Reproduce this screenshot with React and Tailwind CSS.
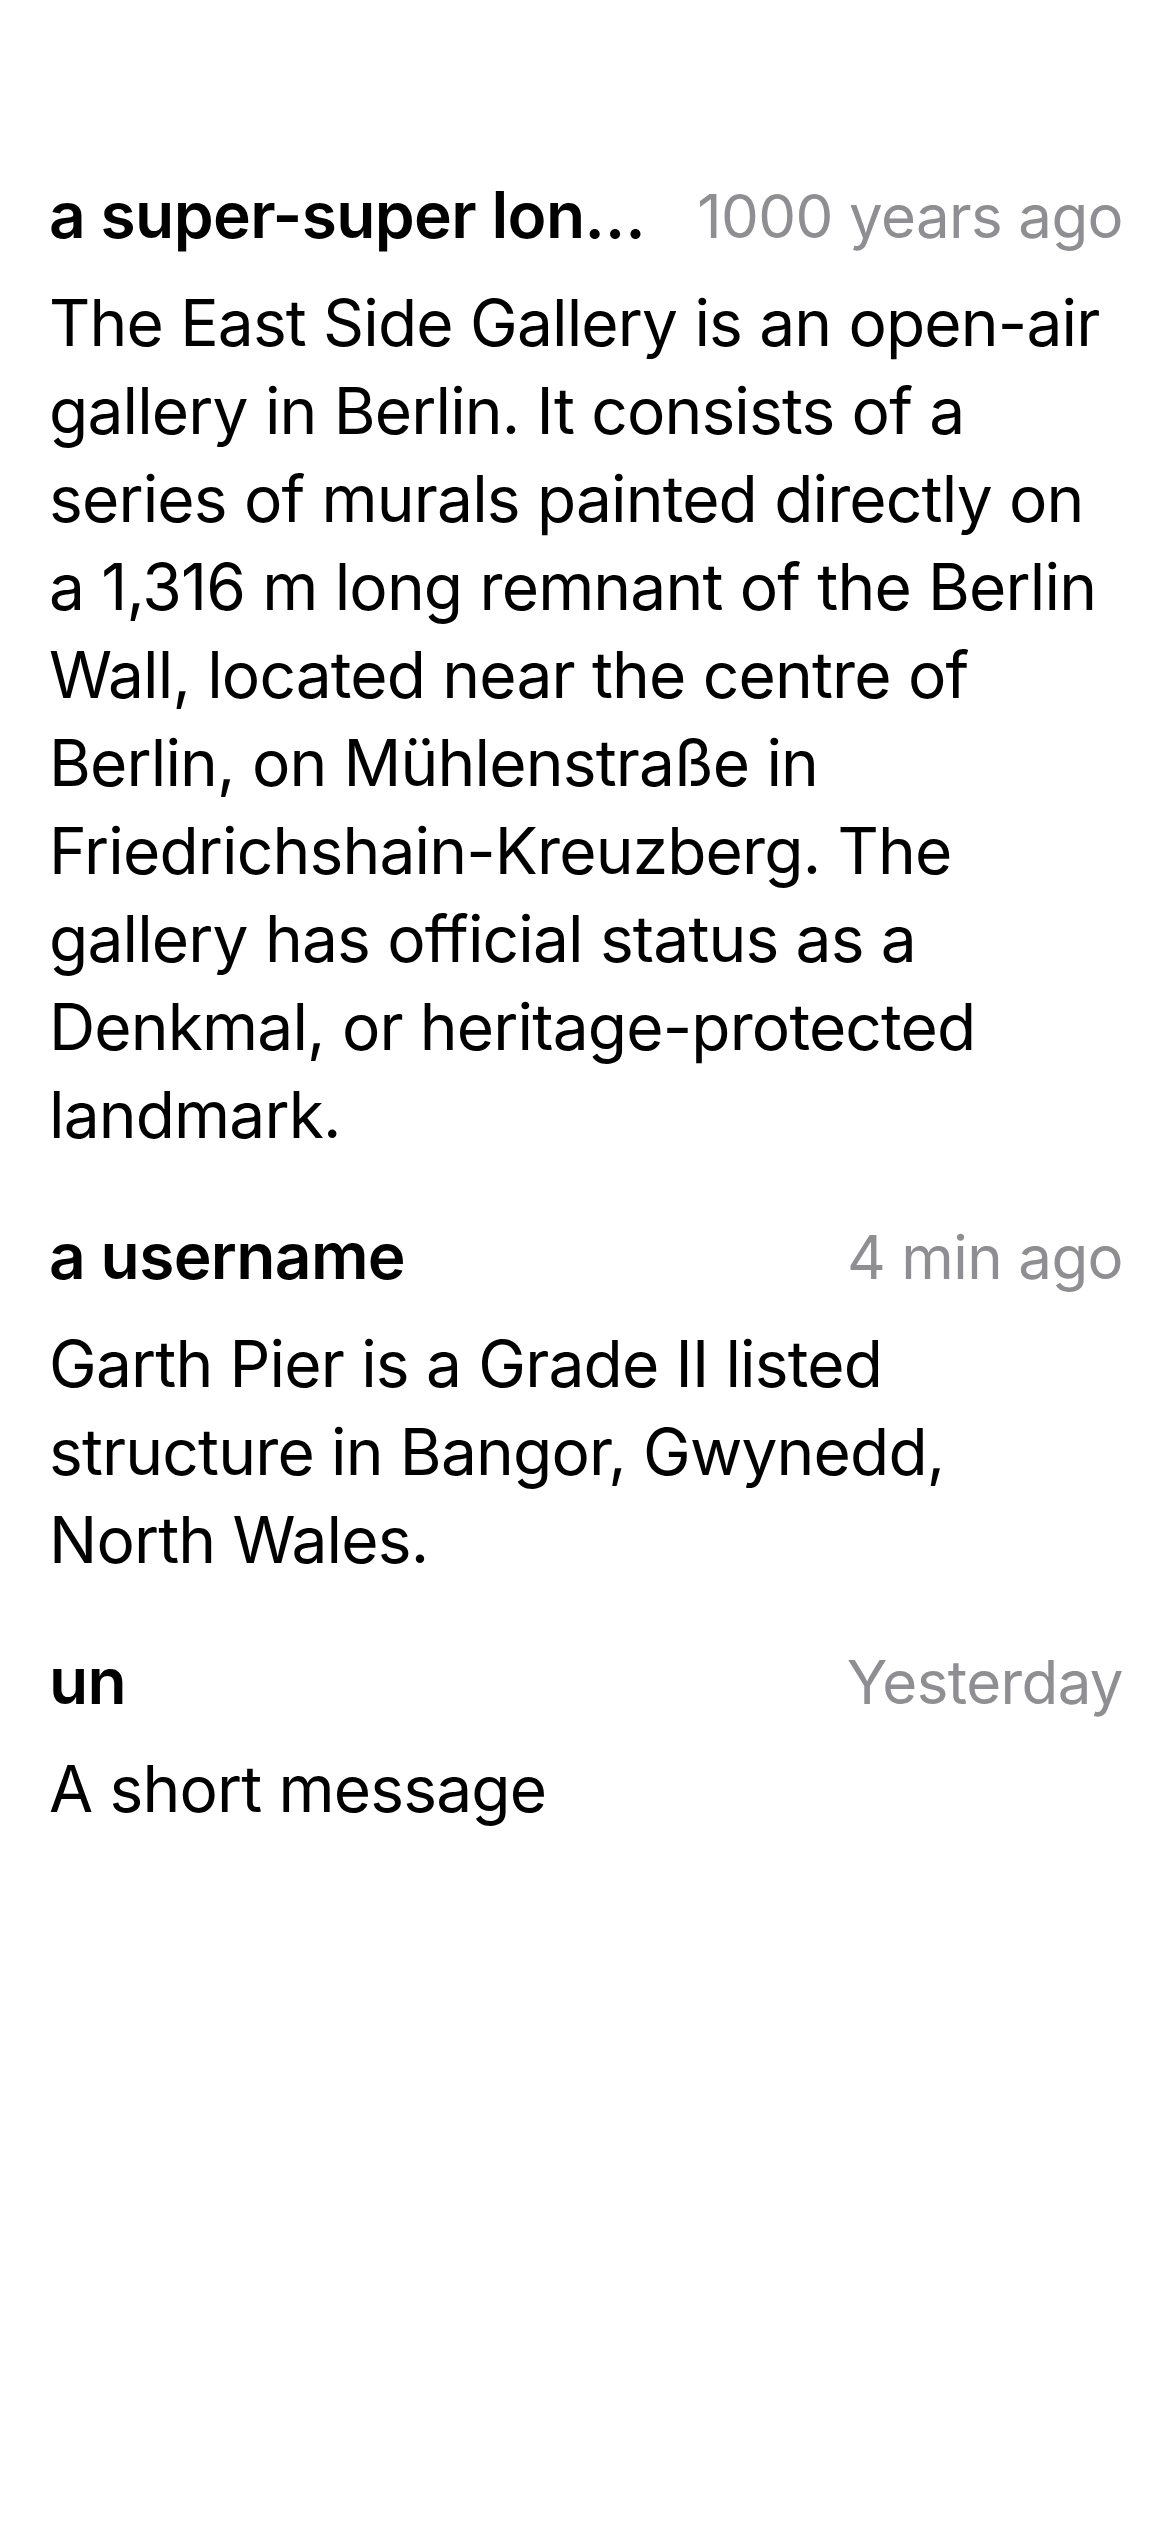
const MESSAGES = [
  {
    id: 1,
    user: 'a super-super lon…',
    time: '1000 years ago',
    text: 'The East Side Gallery is an open-air gallery in Berlin. It consists of a series of murals painted directly on a 1,316 m long remnant of the Berlin Wall, located near the centre of Berlin, on Mühlenstraße in Friedrichshain-Kreuzberg. The gallery has official status as a Denkmal, or heritage-protected landmark.',
  },
  {
    id: 2,
    user: 'a username',
    time: '4 min ago',
    text: 'Garth Pier is a Grade II listed structure in Bangor, Gwynedd, North Wales.',
  },
  {
    id: 3,
    user: 'un',
    time: 'Yesterday',
    text: 'A short message',
  },
]

export default function App() {
  return (
    <div className="min-h-[2532px] w-[1170px] bg-white font-['Inter','Noto_Sans',sans-serif] text-black">
      <div className="pt-[171px] pl-[49px] pr-[47px] flex flex-col gap-[53px]">
        {MESSAGES.map(msg => (
          <div key={msg.id} className="flex flex-col gap-[19px]">
            <div className="flex items-baseline justify-between gap-[40px] leading-[88px]">
              <span className="text-[64px] font-semibold tracking-[-0.01em] whitespace-nowrap min-w-0">{msg.user}</span>
              <span className="text-[60px] text-[#8e8e93] tracking-[-0.01em] whitespace-nowrap shrink-0">{msg.time}</span>
            </div>
            <p className="text-[64px] leading-[88px] tracking-[-0.013em]">{msg.text}</p>
          </div>
        ))}
      </div>
    </div>
  )
}
